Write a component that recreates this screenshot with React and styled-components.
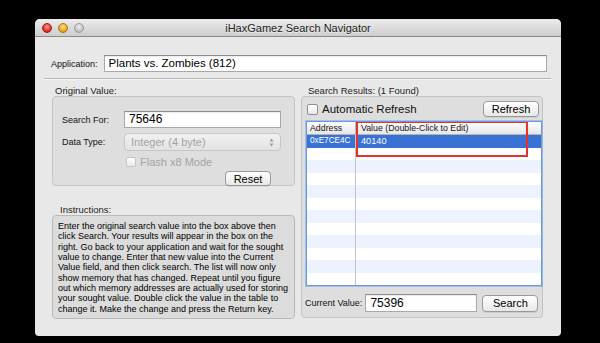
import React from 'react'
import styled, { createGlobalStyle } from 'styled-components'

const GlobalStyle = createGlobalStyle`
  html, body {
    margin: 0;
    background: #000;
  }
  body {
    font-family: 'Liberation Sans', Arial, sans-serif;
    color: #111;
  }
`

const Screen = styled.div`
  width: 600px;
  height: 343px;
  box-sizing: border-box;
  padding: 19px 0 0 35px;
  background: #000;
  overflow: hidden;
`

const Window = styled.div`
  width: 526px;
  height: 317px;
  background: #e8e8e8;
  border-radius: 5px 5px 4px 4px;
  overflow: hidden;
  display: flex;
  flex-direction: column;
`

const TitleBar = styled.div`
  height: 17px;
  flex: none;
  display: grid;
  grid-template-columns: 1fr auto 1fr;
  align-items: center;
  background: linear-gradient(#ececec, #cdcdcd);
  border-bottom: 1px solid #8a8a8a;
`

const Lights = styled.div`
  display: flex;
  gap: 6px;
  padding-left: 7px;
`

const lightColors = {
  close: ['#ff9b91', '#d8261d', '#a4180f'],
  minimize: ['#ffe08a', '#e0a11c', '#a6760d'],
  zoom: ['#f0f0f0', '#bdbdbd', '#9a9a9a'],
}

const Light = styled.span`
  width: 10px;
  height: 10px;
  border-radius: 50%;
  box-sizing: border-box;
  border: 1px solid ${p => lightColors[p.$kind][2]};
  background: radial-gradient(circle at 50% 35%, ${p => lightColors[p.$kind][0]}, ${p => lightColors[p.$kind][1]} 70%);
`

const Title = styled.div`
  font-size: 11px;
  color: #222;
  text-shadow: 0 1px 0 rgba(255, 255, 255, 0.6);
`

const AppRow = styled.div`
  display: flex;
  align-items: center;
  gap: 6px;
  height: 17px;
  margin: 18px 14px 0 16px;
`

const SmallLabel = styled.span`
  font-size: 9px;
  color: #111;
  white-space: nowrap;
`

const TextField = styled.div`
  box-sizing: border-box;
  height: ${p => p.$h || 17}px;
  width: ${p => (p.$w ? `${p.$w}px` : 'auto')};
  flex: ${p => (p.$w ? 'none' : 1)};
  background: #fff;
  border: 1px solid #a8a8a8;
  border-top-color: #8c8c8c;
  box-shadow: inset 0 1px 1px rgba(0, 0, 0, 0.08);
  font-size: ${p => p.$size || 12}px;
  line-height: ${p => (p.$h || 17) - 2}px;
  padding-left: 4px;
  color: #000;
`

const Separator = styled.div`
  margin: 6px 10px 0 9px;
  border-top: 1px solid #b6b6b6;
  border-bottom: 1px solid #f7f7f7;
`

const Columns = styled.div`
  display: grid;
  grid-template-columns: 243px 242px;
  gap: 6px;
  margin: 5px 18px 0 17px;
`

const Column = styled.div`
  display: flex;
  flex-direction: column;
`

const GroupLabel = styled.div`
  font-size: 9.5px;
  line-height: 11px;
  height: 11px;
  padding-left: ${p => p.$indent || 3}px;
  margin-top: ${p => p.$top || 0}px;
  color: #222;
`

const GroupBox = styled.div`
  box-sizing: border-box;
  height: ${p => p.$h}px;
  background: #dedede;
  border: 1px solid #c3c3c3;
  border-radius: 4px;
  position: relative;
`

const OriginalBox = styled(GroupBox)`
  padding: 14px 0 0 9px;
`

const FormRow = styled.div`
  display: grid;
  grid-template-columns: 62px 157px;
  align-items: center;
  margin-top: ${p => p.$top || 0}px;
`

const Popup = styled.div`
  box-sizing: border-box;
  height: 18px;
  display: flex;
  align-items: center;
  justify-content: space-between;
  padding: 0 6px 0 6px;
  border: 1px solid #c6c6c6;
  border-radius: 4px;
  background: linear-gradient(#f1f1f1, #e3e3e3);
  color: #a2a2a2;
  font-size: 11px;
`

const CheckRow = styled.div`
  display: flex;
  align-items: center;
  gap: 4px;
  margin-left: ${p => p.$left || 0}px;
  margin-top: ${p => p.$top || 0}px;
  font-size: ${p => p.$size || 11}px;
  color: ${p => (p.$disabled ? '#a4a4a4' : '#111')};
`

const CheckBox = styled.span`
  width: ${p => p.$size || 10}px;
  height: ${p => p.$size || 10}px;
  box-sizing: border-box;
  border: 1px solid ${p => (p.$disabled ? '#c4c4c4' : '#8f8f8f')};
  border-radius: 2px;
  background: linear-gradient(#ffffff, #e9e9e9);
  flex: none;
`

const Button = styled.div`
  box-sizing: border-box;
  width: ${p => p.$w}px;
  height: ${p => p.$h || 16}px;
  margin-left: ${p => p.$left || 'auto'};
  margin-right: ${p => p.$right || 0}px;
  margin-top: ${p => p.$top || 0}px;
  display: flex;
  align-items: center;
  justify-content: center;
  background: linear-gradient(#ffffff, #e8e8e8);
  border: 1px solid #999;
  border-radius: 4px;
  box-shadow: 0 1px 0 rgba(0, 0, 0, 0.08);
  font-size: 11px;
  color: #000;
  flex: none;
`

const ButtonRow = styled.div`
  display: flex;
`

const InstructionsBox = styled(GroupBox)`
  padding: 5px 0 0 5px;
  background: #dcdcdc;
  border-color: #b9b9b9;
`

const InstructionLine = styled.div`
  font-size: 9px;
  line-height: 10.33px;
  white-space: nowrap;
  color: #000;
`

const ResultsBox = styled(GroupBox)`
  display: flex;
  flex-direction: column;
  padding: 4px 3px 0 5px;
`

const ResultsTop = styled.div`
  display: flex;
  align-items: center;
  height: 16px;
`

const TableWrap = styled.div`
  position: relative;
  margin: 4px 0 0 -1px;
  width: 236px;
  height: 165px;
  box-sizing: border-box;
  border: 1px solid #6b98dc;
  box-shadow: 0 0 0 1px rgba(120, 165, 230, 0.55);
  background: #fff;
  overflow: hidden;
`

const TableRow = styled.div`
  display: grid;
  grid-template-columns: 49px 1fr;
  height: ${p => (p.$header ? 13 : 12.5)}px;
  box-sizing: border-box;
  background: ${p =>
    p.$header
      ? 'linear-gradient(#ffffff, #e6e6e6)'
      : p.$selected
      ? '#3a72d4'
      : p.$odd
      ? '#edf3fe'
      : '#ffffff'};
  border-bottom: ${p => (p.$header ? '1px solid #b3b3b3' : 'none')};
  color: ${p => (p.$selected ? '#fff' : '#111')};
`

const Cell = styled.div`
  font-size: ${p => p.$size || 9.2}px;
  line-height: ${p => (p.$header ? 12 : 12.5)}px;
  padding-left: ${p => (p.$first ? 3 : 5)}px;
  white-space: nowrap;
  overflow: hidden;
  border-right: ${p => (p.$first ? `1px solid ${p.$header ? '#b8b8b8' : '#c4c4c4'}` : 'none')};
`

const Highlight = styled.div`
  position: absolute;
  left: 49px;
  top: -1px;
  width: 172px;
  height: 36px;
  box-sizing: border-box;
  border: 2px solid #e5312b;
  pointer-events: none;
`

const BottomRow = styled.div`
  display: flex;
  align-items: center;
  margin: 8px 0 0 -2px;
  gap: 3px;
`

const instructions = [
  'Enter the original search value into the box above then',
  'click Search. Your results will appear in the box on the',
  'right. Go back to your application and wait for the sought',
  'value to change. Enter that new value into the Current',
  'Value field, and then click search. The list will now only',
  'show memory that has changed. Repeat until you figure',
  'out which memory addresses are actually used for storing',
  'your sought value. Double click the value in the table to',
  'change it. Make the change and press the Return key.',
]

const rows = Array.from({ length: 13 }, (_, i) => i)

const UpDown = () => (
  <svg width="5" height="9" viewBox="0 0 5 9">
    <path d="M2.5 0.5 L4.5 3.5 L0.5 3.5 Z" fill="#9a9a9a" />
    <path d="M2.5 8.5 L4.5 5.5 L0.5 5.5 Z" fill="#9a9a9a" />
  </svg>
)

const App = () => {
  return (
    <Screen>
      <GlobalStyle />
      <Window>
        <TitleBar>
          <Lights>
            <Light $kind="close" />
            <Light $kind="minimize" />
            <Light $kind="zoom" />
          </Lights>
          <Title>iHaxGamez Search Navigator</Title>
          <div />
        </TitleBar>

        <AppRow>
          <SmallLabel>Application:</SmallLabel>
          <TextField $size={11.5}>Plants vs. Zombies (812)</TextField>
        </AppRow>
        <Separator />

        <Columns>
          <Column>
            <GroupLabel>Original Value:</GroupLabel>
            <OriginalBox $h={90}>
              <FormRow>
                <SmallLabel>Search For:</SmallLabel>
                <TextField $w={157}>75646</TextField>
              </FormRow>
              <FormRow $top={5}>
                <SmallLabel>Data Type:</SmallLabel>
                <Popup>
                  <span>Integer (4 byte)</span>
                  <UpDown />
                </Popup>
              </FormRow>
              <CheckRow $left={64} $top={5} $disabled>
                <CheckBox $disabled />
                <span>Flash x8 Mode</span>
              </CheckRow>
              <ButtonRow>
                <Button $w={46} $h={15} $right={23} $top={3}>Reset</Button>
              </ButtonRow>
            </OriginalBox>
            <GroupLabel $top={18} $indent={8}>Instructions:</GroupLabel>
            <InstructionsBox $h={104}>
              {instructions.map(line => (
                <InstructionLine key={line}>{line}</InstructionLine>
              ))}
            </InstructionsBox>
          </Column>

          <Column>
            <GroupLabel $indent={7}>Search Results: (1 Found)</GroupLabel>
            <ResultsBox $h={222}>
              <ResultsTop>
                <CheckRow $size={11.5}>
                  <CheckBox $size={11} />
                  <span>Automatic Refresh</span>
                </CheckRow>
                <Button $w={56}>Refresh</Button>
              </ResultsTop>
              <TableWrap>
                <TableRow $header>
                  <Cell $header $first $size={8.8}>Address</Cell>
                  <Cell $header $size={8.8}>Value (Double-Click to Edit)</Cell>
                </TableRow>
                <TableRow $selected>
                  <Cell $first $size={8.2}>0xE7CE4C</Cell>
                  <Cell>40140</Cell>
                </TableRow>
                {rows.map(i => (
                  <TableRow key={i} $odd={i % 2 === 1}>
                    <Cell $first />
                    <Cell />
                  </TableRow>
                ))}
                <Highlight />
              </TableWrap>
              <BottomRow>
                <SmallLabel>Current Value:</SmallLabel>
                <TextField $w={112} $h={18}>75396</TextField>
                <Button $w={56} $h={17} $left="2px">Search</Button>
              </BottomRow>
            </ResultsBox>
          </Column>
        </Columns>
      </Window>
    </Screen>
  )
}

export default App
